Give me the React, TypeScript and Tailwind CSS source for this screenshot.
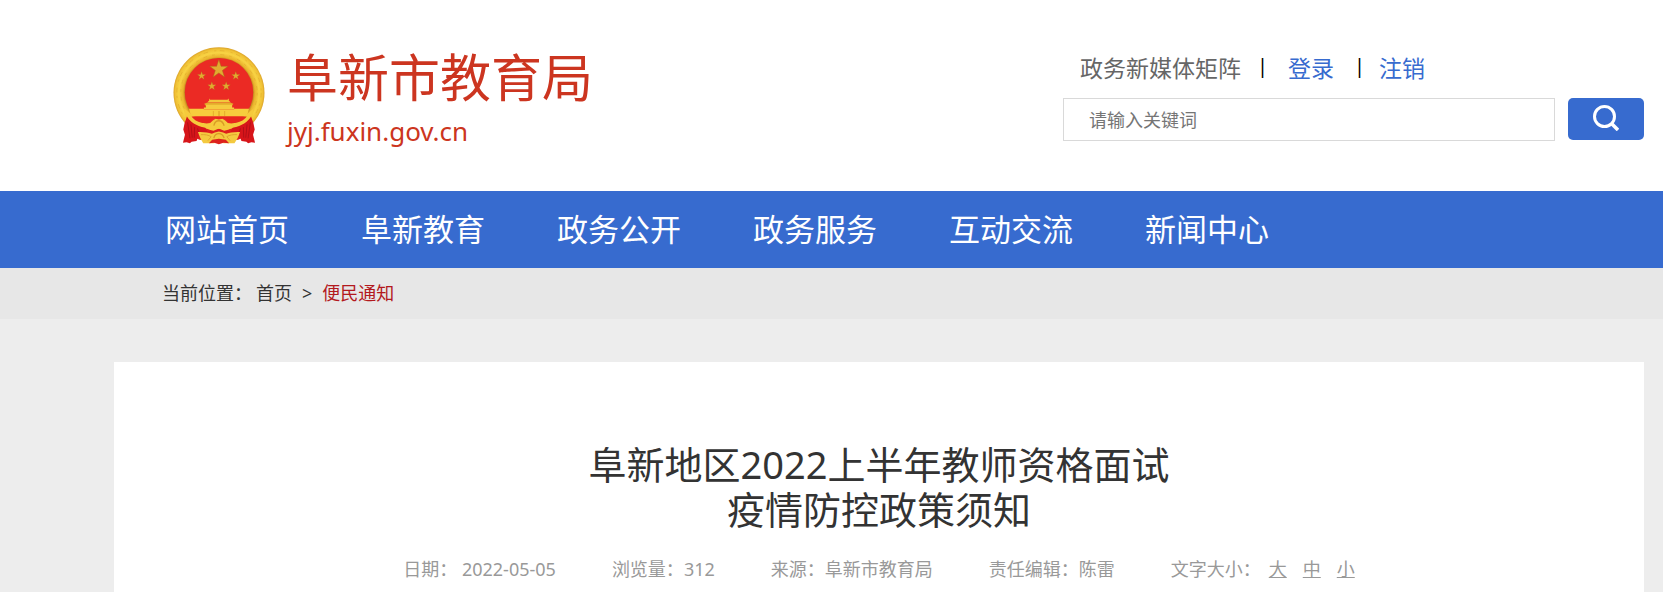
import React from 'react';

const navItems = ['网站首页', '阜新教育', '政务公开', '政务服务', '互动交流', '新闻中心'];

const metaItems = [
  { label: '日期：', value: ' 2022-05-05' },
  { label: '浏览量：', value: '312' },
  { label: '来源：', value: '阜新市教育局' },
  { label: '责任编辑：', value: '陈雷' },
];

const fontSizes = ['大', '中', '小'];

const STAR = 'M0 -10L2.3 -3.1L9.5 -3.1L3.7 1.2L5.9 8.1L0 3.8L-5.9 8.1L-3.7 1.2L-9.5 -3.1L-2.3 -3.1Z';

const stars = [
  { x: 178, y: 102, scale: 2.9 },
  { x: 126, y: 122, scale: 1.35 },
  { x: 229, y: 122, scale: 1.35 },
  { x: 157, y: 153, scale: 1.35 },
  { x: 200, y: 153, scale: 1.35 },
];

const Emblem: React.FC = () => (
  <svg className="w-[92px] h-[98px] shrink-0" viewBox="41 35 275 295" role="img" aria-label="国徽">
    <defs>
      <radialGradient id="gold" cx="0.5" cy="0.5" r="0.5">
        <stop offset="0.74" stopColor="#b8791c" />
        <stop offset="0.79" stopColor="#e9b22c" />
        <stop offset="0.88" stopColor="#f8d344" />
        <stop offset="0.96" stopColor="#f0c135" />
        <stop offset="1" stopColor="#dba32a" />
      </radialGradient>
    </defs>
    <circle cx="178.500" cy="173" r="137" fill="url(#gold)" />
    <g fill="none" stroke="#e0aa2b" strokeWidth="3" opacity="0.6">
      <circle cx="178.500" cy="173" r="127" strokeDasharray="14 19 6 11" />
      <circle cx="178.500" cy="173" r="115" strokeDasharray="8 17 12 15" />
    </g>
    <circle cx="178.500" cy="171" r="103" fill="#eb2a24" />
    <g fill="#e2ab30" stroke="#a8661a" strokeWidth="0.5">
      {stars.map((star) => (
        <path key={`${star.x}-${star.y}`} d={STAR} transform={`translate(${star.x} ${star.y}) scale(${star.scale})`} />
      ))}
    </g>
    {/* Gate tower */}
    <path d="M149 190l3 4h52l4-4v6l6 6h-71l6-6z" fill="#f3c83c" />
    <path d="M134 206l8-3h72l8 3-4 5h-80z" fill="#e3ac2b" />
    <path d="M139 209h79v8h6v6h-91v-6h6z" fill="#f5cc40" />
    <path d="M88 221h45v2h91v-2h45l-7 23H95z" fill="#f7cd3d" />
    <path d="M160 228h3v15h-3zM176 228h5v15h-5zM194 228h3v15h-3z" fill="#e5ae2c" />
    {/* Red silk behind the lower wreath */}
    <path d="M83 246c18 20 42 34 68 36h55c26-2 50-16 68-36l-4 54-34 14-58 8-58-8-34-14z" fill="#df1f1c" />
    {/* Wreath ends closing around the gear */}
    <path
      d="M74 220l24 20c14 20 32 28 54 24l8-8 8-5 10 2 11-2 8 5 8 8c22 4 40-4 54-24l24-20-3 34c-12 16-34 24-60 24l-14 6-12 3-16-7-16 7-12-3-14-6c-26 0-48-8-60-24z"
      fill="#f5ca3c"
    />
    <path d="M96 244h166c-11 15-30 22-52 19l-9-9-9-5-14 2-14-2-9 5-9 9c-22 3-39-4-50-19z" fill="#e8261f" />
    <path d="M163 272c2-10 8-15 15-15s13 5 16 15" fill="none" stroke="#d99c25" strokeWidth="4" />
    {/* Drapes */}
    <path d="M82 244c10 16 27 28 55 34l7 12-26 8-7 20-15 2-5 5-10-3-11 1 6-24-5-16 4-19z" fill="#d7151a" />
    <path d="M275 244c-10 16-27 28-55 34l-7 12 26 8 7 20 15 2 5 5 10-3 11 1-6-24 5-16-4-19z" fill="#d7151a" />
    <path
      d="M84 262l7 48M94 268l4 40M105 276l-1 32M114 280l4 16M273 262l-7 48M263 268l-4 40M252 276l1 32M243 280l-4 16"
      fill="none"
      stroke="#b30f17"
      strokeWidth="3"
    />
    {/* Half gear and tassels below the knot */}
    <path d="M115 291c18-1 30 2 42 5l9-4 12-3 13 3 9 4c12-3 24-6 42-5-5 14-10 24-17 34h-33l-14-6-14 6h-33c-6-10-11-20-16-34z" fill="#f4ca40" />
    <path d="M124 299c12-1 23 1 31 6l-10 12M233 299c-12-1-23 1-31 6l10 12" fill="none" stroke="#e0a62c" strokeWidth="3" />
    <path d="M163 309c2-9 8-13 15-13s13 4 16 13" fill="none" stroke="#d99c25" strokeWidth="4" />
    <path d="M148 325l10-11 20-3 21 3 10 11-17-2-14 5-14-5z" fill="#dd211d" />
  </svg>
);

const Separator: React.FC = () => (
  <span className="text-xl leading-6 text-black" aria-hidden="true">|</span>
);

const Header: React.FC = () => (
  <header className="bg-white">
    <div className="flex justify-between pl-[173px] pr-[19px] pt-[47px] pb-[35px]">
      <a href="#" className="flex items-start gap-[22px] text-[#cc3520]">
        <Emblem />
        <div>
          <div className="text-[51px] leading-[60px]">阜新市教育局</div>
          <div className="text-[26px] leading-[49px]">jyj.fuxin.gov.cn</div>
        </div>
      </a>

      <div className="w-[581px] pt-[7px]">
        <div className="flex items-start pl-[17px] text-[23px] leading-7 text-[#376bcf]">
          <a href="#" className="mr-4 text-[#666666]">政务新媒体矩阵</a>
          <Separator />
          <a href="#" className="mx-5">登录</a>
          <Separator />
          <a href="#" className="ml-[14px]">注销</a>
        </div>
        <form className="flex gap-[13px] mt-4" onSubmit={(e) => e.preventDefault()}>
          <input
            type="text"
            aria-label="请输入关键词"
            placeholder="请输入关键词"
            className="flex-1 min-w-0 h-[43px] px-[25px] border border-[#d9d9d9] text-lg placeholder:text-[#757575]"
          />
          <button
            type="submit"
            aria-label="搜索"
            className="w-[76px] h-[42px] flex justify-center pt-[7px] rounded-[5px] bg-[#376bcf] text-white"
          >
            <svg className="w-[26px] h-[26px]" viewBox="0 0 26 26" fill="none" stroke="currentColor" strokeWidth="3">
              <circle cx="11.500" cy="11.500" r="10" />
              <path d="M18.500 18.500L25 25" strokeWidth="3.500" />
            </svg>
          </button>
        </form>
      </div>
    </div>
  </header>
);

const App: React.FC = () => {
  return (
    <div className="min-h-screen flex flex-col bg-[#ededed] text-[#333333] font-['Noto_Sans','Noto_Sans_CJK_SC',sans-serif]">
      <Header />

      <nav className="bg-[#376bcf]">
        <ul className="flex gap-[72px] pl-[165px] text-[31px] leading-[77px] text-white">
          {navItems.map((item) => (
            <li key={item}>
              <a href="#">{item}</a>
            </li>
          ))}
        </ul>
      </nav>

      {/* Breadcrumb */}
      <div className="flex gap-[10px] pl-[162px] bg-[#e7e7e7] text-lg leading-[51px]">
        <div className="flex gap-1">
          <span>当前位置：</span>
          <a href="#">首页</a>
        </div>
        <span>&gt;</span>
        <a href="#" className="text-[#b3191e]">便民通知</a>
      </div>

      <main className="flex-1 flex flex-col pl-[114px] pr-[19px] pt-[43px]">
        <article className="flex-1 bg-white pt-20 text-center">
          <h1 className="text-[38px] leading-[45px]">
            阜新地区2022上半年教师资格面试
            <br />
            疫情防控政策须知
          </h1>
          <div className="flex justify-center gap-14 mt-6 text-lg leading-[26px] text-[#999999]">
            {metaItems.map((item) => (
              <span key={item.label} className="whitespace-pre">
                {item.label}
                {item.value}
              </span>
            ))}
            <div className="flex gap-2">
              <span>文字大小：</span>
              <div className="flex gap-4">
                {fontSizes.map((size) => (
                  <button key={size} type="button" className="underline">{size}</button>
                ))}
              </div>
            </div>
          </div>
        </article>
      </main>
    </div>
  );
};

export default App;
